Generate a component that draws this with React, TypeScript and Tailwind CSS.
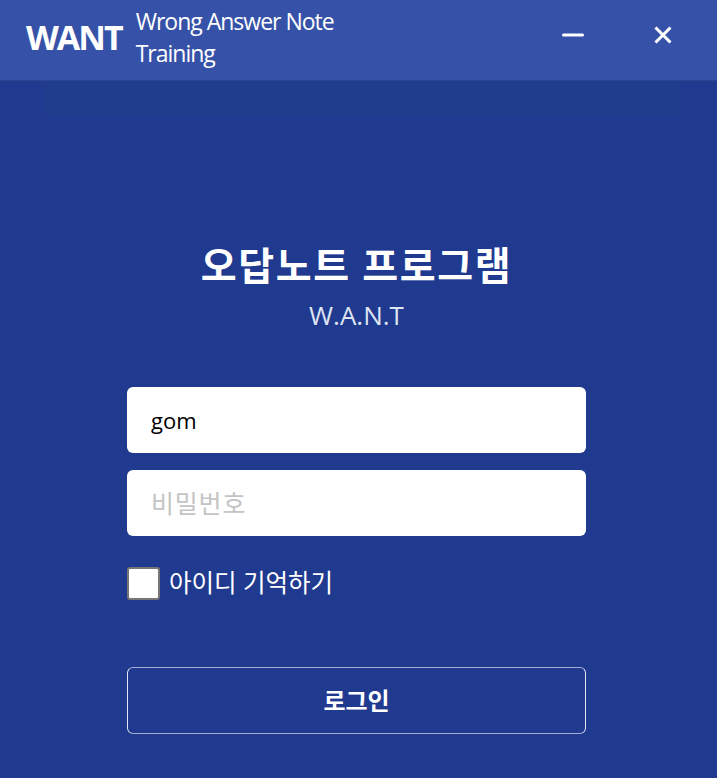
import { useState } from "react";

const font = "font-['Open_Sans','Noto_Sans_CJK_KR',sans-serif]";

export default function App() {
    const [id, setId] = useState("gom");
    const [password, setPassword] = useState("");
    const [remember, setRemember] = useState(false);

    return (
        <div className={`flex h-[778px] w-[717px] flex-col overflow-hidden bg-[#203a8f] text-white ${font}`}>
            <header className="flex h-[81px] shrink-0 items-center justify-between border-b border-[#2a4490] bg-[#3652a8] pb-[6px] pl-[26px] pr-[44px]">
                <div className="flex items-center gap-[14px]">
                    <span className="text-[34px] font-bold tracking-[-2px]">WANT</span>
                    <span className="w-[210px] text-[23px] leading-[32px] tracking-[-1px]">
                        Wrong Answer Note Training
                    </span>
                </div>
                <div className="flex items-center gap-[67px] pb-[4px]">
                    <button aria-label="minimize">
                        <svg width="24" height="24" viewBox="0 0 24 24">
                            <path d="M1.5 12h19" stroke="white" strokeWidth="3" strokeLinecap="round" />
                        </svg>
                    </button>
                    <button aria-label="close">
                        <svg width="20" height="20" viewBox="0 0 20 20">
                            <path d="M2.5 2.5l15 15M17.5 2.5l-15 15" stroke="white" strokeWidth="3" />
                        </svg>
                    </button>
                </div>
            </header>

            <main className="relative flex flex-1 flex-col items-center pr-[4px] pt-[158px]">
                <div className="absolute left-[45px] top-0 h-[34px] w-[635px] bg-[#1f3c8d]" />
                <h1 className="text-[39px] leading-[52px] font-bold tracking-[1.6px]">오답노트 프로그램</h1>
                <p className="mt-[6px] text-[26px] leading-[36px] text-[#dfe4f2]">W.A.N.T</p>

                <form className="mt-[54px] flex w-[459px] flex-col" onSubmit={(e) => e.preventDefault()}>
                    <input
                        value={id}
                        onChange={(e) => setId(e.target.value)}
                        className="h-[66px] rounded-md bg-white px-6 text-[22px] text-black outline-none"
                    />
                    <input
                        type="password"
                        value={password}
                        onChange={(e) => setPassword(e.target.value)}
                        placeholder="비밀번호"
                        className="mt-[17px] h-[66px] rounded-md bg-white px-6 text-[25px] tracking-[0.8px] text-black outline-none placeholder:text-[#c4c4c4]"
                    />
                    <label className="mt-[29px] flex items-center gap-[9px] text-[24.5px] leading-[36px]">
                        <input
                            type="checkbox"
                            checked={remember}
                            onChange={(e) => setRemember(e.target.checked)}
                            className="size-[33px] appearance-none rounded-[3px] border-2 border-[#767676] bg-white"
                        />
                        아이디 기억하기
                    </label>
                    <button
                        type="submit"
                        className="mt-[66px] h-[67px] rounded-md border border-x-[#e4e8f4] border-y-[#a3aed4] text-[24px] font-bold"
                    >
                        로그인
                    </button>
                </form>
            </main>
        </div>
    );
}
